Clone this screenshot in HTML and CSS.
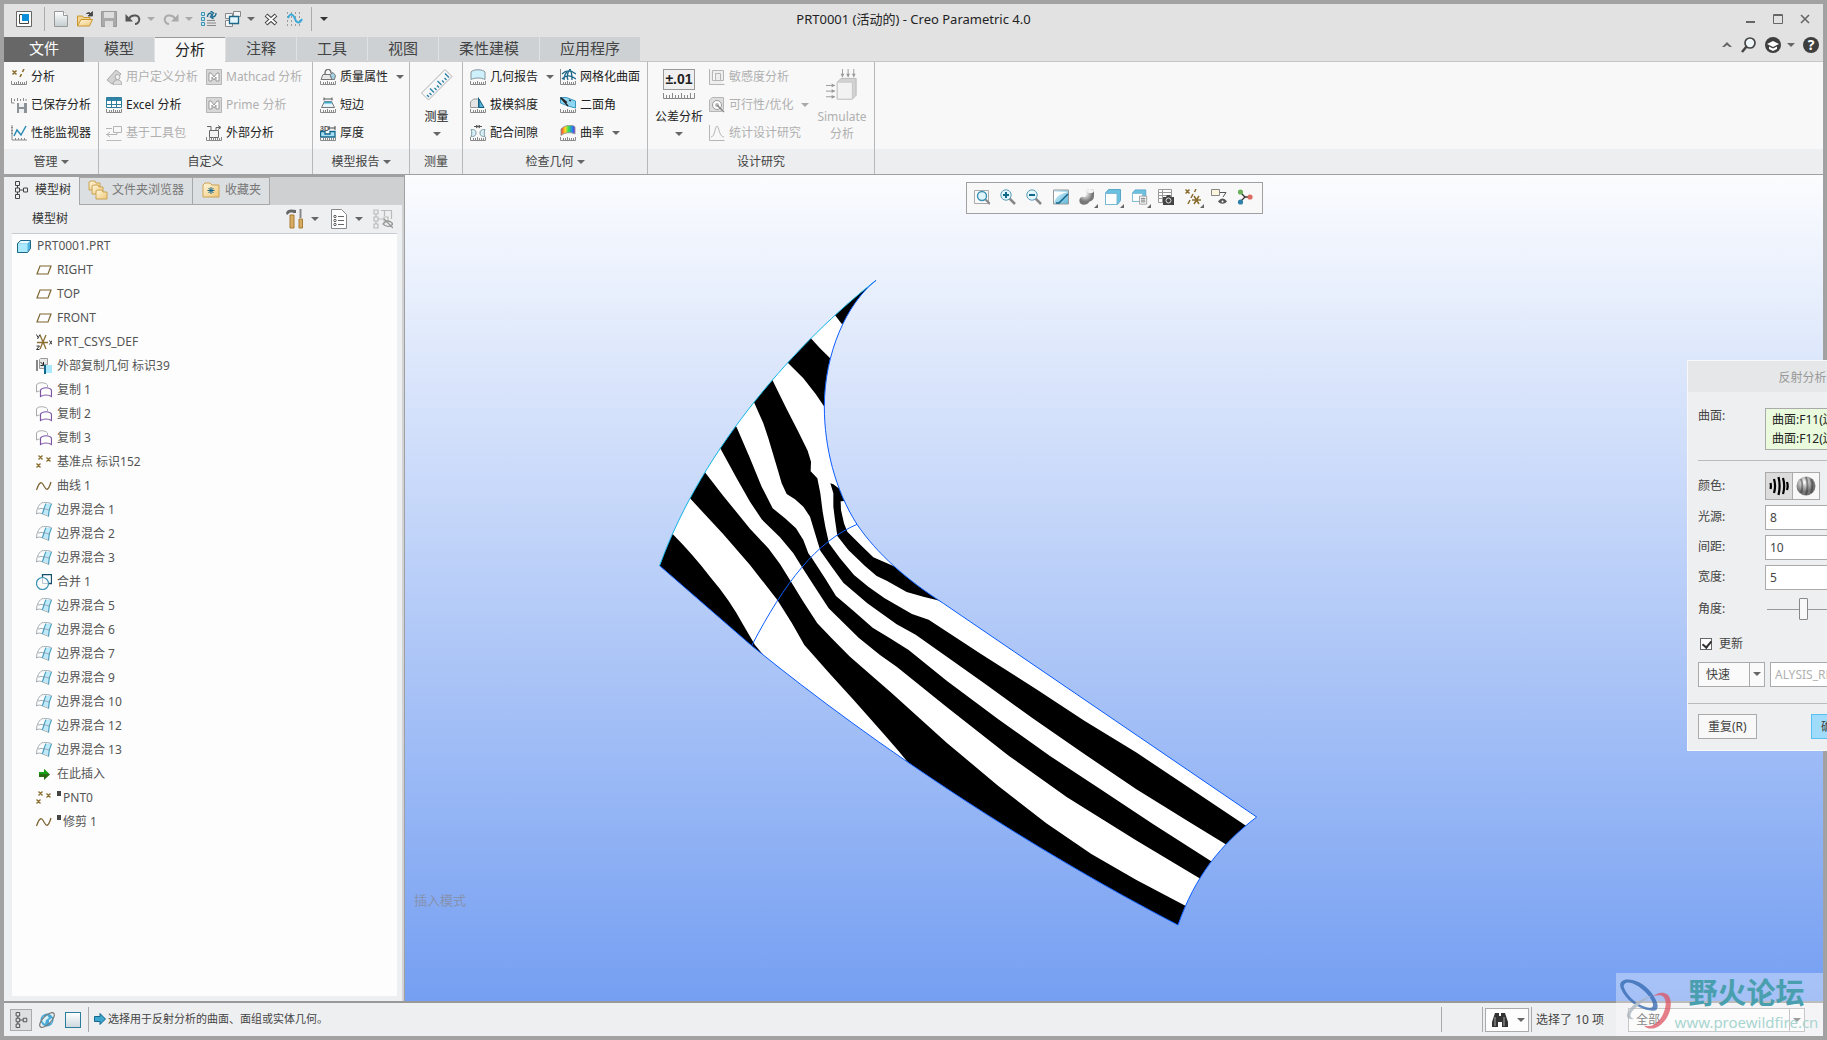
FILE: index.html
```
<!DOCTYPE html>
<html lang="zh-CN">
<head>
    <meta charset="UTF-8" />
    <meta name="viewport" content="width=device-width, initial-scale=1" />
    <title>PRT0001 (活动的) - Creo Parametric 4.0</title>
    <link rel="stylesheet" href="styles.css">
</head>
<body>
    <!-- icons -->
    <svg class="sprite" aria-hidden="true">
        <defs>
            <linearGradient id="gBlue" x1="0" y1="0" x2="1" y2="1"><stop offset="0" stop-color="#e4f8ff"/><stop offset="1" stop-color="#5cb5d8"/></linearGradient>
            <linearGradient id="gGray" x1="0" y1="0" x2="0" y2="1"><stop offset="0" stop-color="#fff"/><stop offset="1" stop-color="#c3ccd0"/></linearGradient>
            <linearGradient id="gFolder" x1="0" y1="0" x2="1" y2="1"><stop offset="0" stop-color="#fff6dc"/><stop offset="1" stop-color="#f0c878"/></linearGradient>
            <linearGradient id="gRainbow" x1="0" y1="0" x2="1" y2="0"><stop offset="0" stop-color="#e33"/><stop offset=".3" stop-color="#fd2"/><stop offset=".55" stop-color="#3d5"/><stop offset=".8" stop-color="#28e"/><stop offset="1" stop-color="#72d"/></linearGradient>
            <radialGradient id="gBall" cx=".4" cy=".3"><stop offset="0" stop-color="#fff"/><stop offset="1" stop-color="#777"/></radialGradient>
            <g id="ruler"><path d="M.5 12v3.5h15V12M3.5 13v2M5.5 13v2M7.5 12v3M9.5 13v2M11.5 13v2M13.5 13v2" fill="none" stroke="#8a8a8a"/></g>
            <symbol id="i-analysis" viewBox="0 0 16 16"><path d="M1.5 1.500l4 4m0-4l-4 4M13 0l-1.500 3M10.500 5l-1.500 3" stroke="#8a6d2f" stroke-width="1.600" fill="none"/><use href="#ruler"/></symbol>
            <symbol id="i-saved" viewBox="0 0 16 16"><path d="M.5 1v5h3M3.500 2v2M6.500 1v3M9.500 2v2M12.500 1v3M15 2v2" fill="none" stroke="#8a8a8a"/><path d="M6 6h10v10H6z" fill="#8d9296"/><path d="M8 6h5v4H8zM8 12h5v4H8z" fill="#eef1f3"/></symbol>
            <symbol id="i-perf" viewBox="0 0 16 16"><path d="M1 0v15h15M0 2.500h2M0 5.500h2M0 8.500h2M4.500 13v2M7.500 13v2M10.500 13v2M13.500 13v2" fill="none" stroke="#8a8a8a"/><path d="M3 11l3-6 4 5 5-9" fill="none" stroke="#2b8ab4" stroke-width="1.500"/></symbol>
            <symbol id="i-user" viewBox="0 0 16 16"><path d="M1 11L10 1l5 4-9 10z" fill="#d2d2d2" stroke="#aaa"/><circle cx="11.500" cy="8" r="2.500" fill="#eee" stroke="#aaa"/><path d="M7 16c0-7 9-7 9 0z" fill="#ddd" stroke="#aaa"/></symbol>
            <symbol id="i-excel" viewBox="0 0 16 16"><path d="M.5.500h15v10H.500z" fill="#fff" stroke="#2f7d9c"/><path d="M1 1h14v3H1z" fill="#2f86aa"/><path d="M.5 7.500h15M5.500 1v9M10.500 1v9" stroke="#2f7d9c"/><use href="#ruler"/></symbol>
            <symbol id="i-kit" viewBox="0 0 16 16"><path d="M7.500 1.500h8v6h-8zM0 3.500h6M0 9.500h11v-2M4 7l-3 2.500 3 2.500" fill="none" stroke="#b5b5b5"/><path d="M.5 15.500h15" stroke="#bbb"/></symbol>
            <symbol id="i-mathcad" viewBox="0 0 16 16"><path d="M.5.500h15v15H.500z" fill="#d8d8d8" stroke="#b5b5b5"/><path d="M3 12V4h2l3 4 3-4h2v8h-3V8l-2 3-2-3v4z" fill="#fff" stroke="#999"/></symbol>
            <symbol id="i-external" viewBox="0 0 16 16"><path d="M3.500 5.500h9v7h-9zM1 1.500h4v4M10 5V2.500h4M12 .500l3 2-3 2" fill="#f2f2f2" stroke="#666"/><use href="#ruler"/></symbol>
            <symbol id="i-mass" viewBox="0 0 16 16"><path d="M1 10.500l2-5h7l2 5z" fill="#e8e8e8" stroke="#777"/><path d="M10 5.500l3-2 2.500 3-1 4H12z" fill="#9fd0e4" stroke="#777"/><path d="M5 5c0-6 6-6 6-1" fill="none" stroke="#777" stroke-width="1.500"/><use href="#ruler"/></symbol>
            <symbol id="i-short" viewBox="0 0 16 16"><path d="M4 .500v3M12 .500v3M4 2h8" stroke="#555"/><path d="M4.500 4.500h7l3 6h-13z" fill="#e5f4f9" stroke="#777"/><path d="M4.500 4.500h7l1 2h-9z" fill="#48a6c9"/><use href="#ruler"/></symbol>
            <symbol id="i-thick" viewBox="0 0 16 16"><text x="0" y="6" font-size="7" font-weight="bold" font-family="Liberation Sans" fill="#555">3D</text><path d="M9 3h6M9 1v4M15 1v4" stroke="#444"/><path d="M.5 6.500H5V9h5V6.500h5v5.500H.500z" fill="#a8def2" stroke="#14678c" stroke-width="1.300"/><use href="#ruler"/></symbol>
            <symbol id="i-measure" viewBox="0 0 32 32"><path d="M.5 24L24 .500l7 7L7.500 31z" fill="#f5f7f8" stroke="#b0b0b0"/><path d="M8 28l-2-2M10.500 26l-2-2M13 23.500l-4-4M15.500 21l-2-2M18 18.500l-2-2M20.500 16l-4-4M23 13.500l-2-2M25.500 11l-2-2M28 8.500l-4-4" stroke="#2b7fa5" stroke-width="1.300"/></symbol>
            <symbol id="i-geo" viewBox="0 0 16 16"><path d="M1 10.500V3c2-3 12-3 14 0v7.500c-4-2-10-2-14 0z" fill="#cdf0fc" stroke="#86969e"/><use href="#ruler"/></symbol>
            <symbol id="i-draft" viewBox="0 0 16 16"><path d="M.5 5l3-3H9v8.500H.500z" fill="#e5e5e5" stroke="#999"/><path d="M8.500.500v10M9 2l5 8.500H9z" fill="#56b3d6" stroke="#155f80"/><use href="#ruler"/></symbol>
            <symbol id="i-fit" viewBox="0 0 16 16"><path d="M4 1.500h8M6 0l4 3M10 0L6 3" stroke="#555"/><path d="M1 4.500c2 0 5 0 5 3.500s-3 3.500-5 3.500c1-2 1-5 0-7zM15 4.500c-2 0-5 0-5 3.500s3 3.500 5 3.500c-1-2-1-5 0-7z" fill="#d9eff7" stroke="#7b98a4"/><use href="#ruler"/></symbol>
            <symbol id="i-mesh" viewBox="0 0 16 16"><path d="M.5 0v15" stroke="#8a8a8a"/><path d="M2 5c4-4 9-4 14 0M2 10c4-4 9-4 14 0M8 11c-2-4 0-8 2-11M12 11c0-4 0-8-2-11M4 11c0-3 1-6 3-8" fill="none" stroke="#1d6888" stroke-width="1.300"/><use href="#ruler"/></symbol>
            <symbol id="i-dihedral" viewBox="0 0 16 16"><path d="M.5.500h6l9 3.500v7L8 9 .500 6z" fill="#8fd6f2" stroke="#3a96bd"/><path d="M.5.500L8 9M2 1.500l5 4M9 3l2 1" stroke="#222" stroke-width="1.300"/><use href="#ruler"/></symbol>
            <symbol id="i-curv" viewBox="0 0 16 16"><path d="M1 10.500V4c3-4 12-5 14-2v7c-4-2-10-2-14 1.500z" fill="url(#gRainbow)" stroke="#999"/><use href="#ruler"/></symbol>
            <symbol id="i-sens" viewBox="0 0 16 16"><path d="M.5 0v15.500h15M3.500 1.500h11v10h-11zM6.500 4.500h5v7h-5z" fill="#eee" stroke="#b5b5b5"/></symbol>
            <symbol id="i-feas" viewBox="0 0 16 16"><path d="M.5 3l3-2.500h11V12l-2 2.500H.500z" fill="#ddd" stroke="#b5b5b5"/><circle cx="8" cy="8" r="4.500" fill="#fff" stroke="#999"/><circle cx="8" cy="8" r="2" fill="#bbb"/><path d="M8 8l7 7" stroke="#888" stroke-width="1.500"/></symbol>
            <symbol id="i-stat" viewBox="0 0 16 16"><path d="M.5 0v15.500h15M2 12c4 0 4-11 6-11s2 11 7 11" fill="none" stroke="#b5b5b5"/></symbol>
            <symbol id="i-simulate" viewBox="0 0 34 34"><path d="M12 14l4-4h16v18l-4 4H12z" fill="#d2d2d2" stroke="#b8b8b8"/><path d="M12 14h16v18H12z" fill="#f2f2f2" stroke="#c5c5c5"/><path d="M17.500 0v8M23.500 0v8M29.500 0v8M0 17.500h9M0 23.500h9M0 29.500h9" stroke="#999"/><path d="M15.500 5h4l-2 4zM21.500 5h4l-2 4zM27.500 5h4l-2 4zM6 15.500v4l4-2zM6 21.500v4l4-2zM6 27.500v4l4-2z" fill="#999"/></symbol>
            <symbol id="i-app" viewBox="0 0 16 16"><path d="M.5.500h15v15H.500z" fill="#fff" stroke="#666"/><path d="M3.500 3.500h9v9h-9z" fill="#fff" stroke="#444"/><path d="M6 3h7v7H6z" fill="#0a8fd8"/></symbol>
            <symbol id="i-new" viewBox="0 0 16 16"><path d="M1.500.500h9l4 4v11h-13z" fill="url(#gGray)" stroke="#999"/><path d="M10.500.500v4h4" fill="#fff" stroke="#999"/></symbol>
            <symbol id="i-open" viewBox="0 0 16 16"><path d="M.5 15V5h5l1 1.500H13V9" fill="#f3d491" stroke="#c9962f"/><path d="M.5 15L4 8.500h11.500L12.500 15z" fill="url(#gFolder)" stroke="#c9962f"/><path d="M9 3c2-2 4-2 5 0M15.500.500V5H11z" fill="#444" stroke="#444" stroke-width=".8"/></symbol>
            <symbol id="i-save" viewBox="0 0 16 16"><path d="M.5.500h15v15H.500z" fill="#aaa" stroke="#999"/><path d="M3 1h10v6H3zM4 10h8v6H4z" fill="#ddd"/></symbol>
            <symbol id="i-undo" viewBox="0 0 16 16"><path d="M4 8c2-5 12-5 10 2-.500 1.500-2 3-4 3" fill="none" stroke="#555" stroke-width="2"/><path d="M.5 3v7.500H8z" fill="#555"/></symbol>
            <symbol id="i-redo" viewBox="0 0 16 16"><path d="M12 8C10 3 0 3 2 10c.500 1.500 2 3 4 3" fill="none" stroke="#aaa" stroke-width="2"/><path d="M15.500 3v7.500H8z" fill="#aaa"/></symbol>
            <symbol id="i-regen" viewBox="0 0 16 16"><path d="M.5 1.500h3v3h-3zM.5 6.500h3v3h-3zM.5 11.500h3v3h-3z" fill="#c8eefb" stroke="#3a91b5"/><path d="M6 9.500h8M6 12h9M6 14.500h9" stroke="#888"/><path d="M6.500 6c0-3 1-4 4-4M9.500 0l3 2-3 2.500M15 2c0 3-1 4-4 4M12 3.500L9.500 6l3 2" fill="none" stroke="#1f6f92" stroke-width="1.400"/></symbol>
            <symbol id="i-windows" viewBox="0 0 16 16"><path d="M.5 2.500h7v5h-7zM8.500.500h7v5h-7zM.5 9.500h7v6h-7z" fill="#f5f5f5" stroke="#888"/><path d="M4.500 5.500h9v7h-9z" fill="#e3f6fc" stroke="#1d6888" stroke-width="1.300"/></symbol>
            <symbol id="i-closewin" viewBox="0 0 16 16"><path d="M3 4l10 9M13 4L3 13" stroke="#444" stroke-width="4"/><path d="M3.500 4.500l9 8M12.500 4.500l-9 8" stroke="#fff" stroke-width="1.800"/></symbol>
            <symbol id="i-wave" viewBox="0 0 16 16"><path d="M0 2h16M0 6h16M0 10h16M0 14h16" stroke="#555" stroke-dasharray="1 3"/><path d="M1 7c3-7 6-2 7 1s4 6 7 0" fill="none" stroke="#36a9d8" stroke-width="2"/></symbol>
            <symbol id="i-tree" viewBox="0 0 18 18"><path d="M3.500.500h4v4h-4zM3.500 7h4v4h-4zM3.500 13.500h4v4h-4zM11.500 7h4v4h-4zM5.500 4.500V7M5.500 11v2.500M7.500 9h4" fill="none" stroke="#444"/></symbol>
            <symbol id="i-folders" viewBox="0 0 20 20"><path d="M1 10V2l2-1h4l1 2h4v7z" fill="url(#gFolder)" stroke="#c9a250"/><path d="M4 14V6l2-1h4l1 2h4v7z" fill="url(#gFolder)" stroke="#c9a250"/><path d="M8 19v-8l2-1h4l1 2h4v7z" fill="url(#gFolder)" stroke="#c9a250"/></symbol>
            <symbol id="i-fav" viewBox="0 0 20 20"><path d="M2 17V5l2-2h5l2 2h7v12z" fill="url(#gFolder)" stroke="#c9a250"/><path d="M10 7v7M6.500 10.500h7M7.500 8l5 5M12.500 8l-5 5" stroke="#14678c"/></symbol>
            <symbol id="i-tools" viewBox="0 0 18 20"><path d="M0 4c1-4 5-4 10-3v3H7V3.500H4L1 6z" fill="#666"/><path d="M4 6h4v13H4z" fill="#d8ad63" stroke="#a87a32"/><path d="M14.500 0v9" stroke="#888" stroke-width="2"/><path d="M13 10h3.500v9H13z" fill="#d8ad63" stroke="#a87a32"/></symbol>
            <symbol id="i-list" viewBox="0 0 18 20"><path d="M1.500.500h10l5 5v14h-15z" fill="#fff" stroke="#888"/><path d="M8 7.500h6M8 11.500h6M8 15.500h6" stroke="#666"/><circle cx="5" cy="7.500" r="1.200" fill="none" stroke="#555"/><circle cx="5" cy="11.500" r="1.200" fill="none" stroke="#555"/><circle cx="5" cy="15.500" r="1.200" fill="none" stroke="#555"/></symbol>
            <symbol id="i-hidetree" viewBox="0 0 20 20"><path d="M1 1h4v4H1zM1 8h4v4H1zM1 15h4v4H1zM11 8h4v4h-4zM3 5v3M3 12v3M5 10h6M8 1.500h11M11.500 2v5M18.500 2v8" fill="none" stroke="#bbb" stroke-width="1.200"/><path d="M10 15c3-4 7-4 10 0-3 3-7 3-10 0zM11 10l9 9" fill="none" stroke="#999" stroke-width="1.300"/></symbol>
            <symbol id="i-part" viewBox="0 0 16 16"><path d="M1.500 5.500l3-3h10v8l-3 4h-10z" fill="#4db4dd" stroke="#1d6888"/><path d="M2 6h9.500v8H2z" fill="#a9e8fd"/><path d="M2 5.500l3-2.500h9l-2.500 2.500z" fill="#e8faff"/></symbol>
            <symbol id="i-plane" viewBox="0 0 16 16"><path d="M4 4h11l-3 8H1z" fill="none" stroke="#7d6432" stroke-width="1.200"/></symbol>
            <symbol id="i-csys" viewBox="0 0 16 16"><path d="M1 8.500h11M4 1l6 14M10 1L4 15" stroke="#8a6d2f" stroke-width="1.300"/><path d="M.5.500L2 3.500M4 .500L1.500 5M13.500 6.500l2.500 4m0-4l-2.500 4M.5 12h3L.500 15.500h3" fill="none" stroke="#333"/></symbol>
            <symbol id="i-extcopy" viewBox="0 0 16 16"><path d="M0 2h2v11H0z" fill="#888"/><path d="M3.500 1.500l1-1h7v6h-3v4h-5z" fill="#e8e8e8" stroke="#999"/><path d="M4.500 4l3 3M7.500 4v3.500H4.500" stroke="#222" fill="none"/><path d="M10 7h6v8h-6z" fill="#a9e8fd"/><path d="M8 7h2v9H8z" fill="#14678c"/></symbol>
            <symbol id="i-copy" viewBox="0 0 16 16"><path d="M.5 10V3c1-3 9-3 11 0v2M.5 10l3-1" fill="none" stroke="#aaa"/><path d="M4.500 14.500V8c2-3 9-3 11 0v6.500c-3-2-8-2-11 0z" fill="#fff" stroke="#7b55a3" stroke-width="1.200"/></symbol>
            <symbol id="i-points" viewBox="0 0 16 16"><path d="M2.500 1.500l4 4m0-4l-4 4M10.500 3.500l4 4m0-4l-4 4M.5 9.500l4 4m0-4l-4 4" stroke="#8a6d2f" stroke-width="1.300"/></symbol>
            <symbol id="i-curve" viewBox="0 0 16 16"><path d="M.5 12C4 2 6 4 8 8s4 6 7-4" fill="none" stroke="#7d6432" stroke-width="1.300"/></symbol>
            <symbol id="i-blend" viewBox="0 0 16 16"><path d="M10 2c2-.500 4-.500 5.500-.500-2 4-3 8-3 12.500-1.500-1.500-4-2-6-2C8 9 8.500 5 10 2z" fill="#bdeafa"/><path d="M.5 12C.500 7 3 1 7.500.500c3-.300 5 .200 8 1M.5 12c2-1.500 4-1 6 0s4 1 6 2.500M2 7c4-1.500 8 .500 12 1" fill="none" stroke="#a3adb2"/><path d="M10 1.500C8 5 8 9 6 12M15.500 2c-2 4-3 8-3 12.500" fill="none" stroke="#4c9dbd" stroke-width="1.200"/></symbol>
            <symbol id="i-merge" viewBox="0 0 16 16"><path d="M6.500 3V.500h9v9H12" fill="none" stroke="#14506c" stroke-width="1.300"/><circle cx="6.500" cy="9.500" r="6" fill="none" stroke="#3a91b5" stroke-width="1.200"/><path d="M6.500 4v5.500H12" fill="none" stroke="#b8c8d0"/></symbol>
            <symbol id="i-insert" viewBox="0 0 16 16"><path d="M3 6h5V3l6 5.500L8 14v-3H3z" fill="#2a6a12"/><path d="M3 6h5V3l5 5H3z" fill="#16a016"/></symbol>
            <symbol id="i-zoomfit" viewBox="0 0 16 16"><path d="M.5 1.500h14v13H.500z" fill="#fafafa" stroke="#aaa"/><path d="M11 10l5 5" stroke="#888" stroke-width="2"/><circle cx="8" cy="7" r="4.500" fill="#dff4fb" stroke="#3a91b5" stroke-width="1.400"/></symbol>
            <symbol id="i-zoomin" viewBox="0 0 16 16"><path d="M9 9l6 6" stroke="#888" stroke-width="2.500"/><circle cx="6" cy="6" r="5.200" fill="#e2f6fd" stroke="#5c9cb8"/><path d="M3 6h6M6 3v6" stroke="#14678c" stroke-width="2"/></symbol>
            <symbol id="i-zoomout" viewBox="0 0 16 16"><path d="M9 9l6 6" stroke="#888" stroke-width="2.500"/><circle cx="6" cy="6" r="5.200" fill="#e2f6fd" stroke="#5c9cb8"/><path d="M3 6h6" stroke="#14678c" stroke-width="2"/></symbol>
            <symbol id="i-repaint" viewBox="0 0 16 16"><path d="M.5 1h15v14H.500z" fill="url(#gBlue)" stroke="#999"/><path d="M1 3v12c1-7 5-10 14-12z" fill="#fff"/><path d="M3 14h3l9-9" fill="none" stroke="#14678c" stroke-width="1.500"/></symbol>
            <symbol id="i-shade" viewBox="0 0 16 16"><path d="M7 2c2-3 8-2 8 0v5c0 4-3 5-5 6-1 3-7 4-9 1C-1 10 2 7 5 8c2 0 3-2 2-6z" fill="url(#gBall)"/><path d="M7 2c2-3 8-2 8 0-1 3-6 3-8 0z" fill="#f4f4f4"/></symbol>
            <symbol id="i-box" viewBox="0 0 16 16"><path d="M.5 4l3-3.500h12v11l-3 4H.500z" fill="#6cc0e0" stroke="#5aa8c8"/><path d="M.5 4.500h11.500v11H.500z" fill="#fff" stroke="#7ab9d3"/></symbol>
            <symbol id="i-boxlist" viewBox="0 0 18 17"><path d="M.5 4l3-3.500h12v11l-3 2H.500z" fill="#6cc0e0" stroke="#5aa8c8"/><path d="M.5 4.500h11.500v9H.500z" fill="#fff" stroke="#7ab9d3"/><path d="M8.500 7.500h8v9h-8z" fill="#fff" stroke="#999"/><path d="M10 10h5M10 12h5M10 14h5" stroke="#666"/></symbol>
            <symbol id="i-viewcam" viewBox="0 0 16 16"><path d="M.5.500h13v13H.500zM.5 3.500h13M.5 6.500h13M.5 9.500h13M4.500.500v13" fill="#fff" stroke="#999"/><path d="M5 8h3l1-2h3l1 2h3v8H5z" fill="#444"/><circle cx="10.500" cy="11.500" r="2.500" fill="none" stroke="#ddd"/></symbol>
            <symbol id="i-datum" viewBox="0 0 16 16"><path d="M.5.500l4 4m0-4l-4 4M11 0L9.500 3M8 5L6 9M5 11l-2 4M7 11h9M9 7l5 8M14 7l-5 8" stroke="#8a6d2f" stroke-width="1.500"/></symbol>
            <symbol id="i-annot" viewBox="0 0 16 16"><path d="M.5.500h8v6h-8z" fill="#fdf6dc" stroke="#888"/><path d="M9 3.500h6L12 8" fill="none" stroke="#555"/><path d="M7 12.500c3-4 6-4 9 0-3 3-6 3-9 0z" fill="#555"/><circle cx="11.500" cy="12.500" r="1" fill="#fff"/></symbol>
            <symbol id="i-spin" viewBox="0 0 16 16"><path d="M3 3l5 5h5M8 8l-5 5" fill="none" stroke="#333" stroke-width="1.300"/><circle cx="3.500" cy="3" r="2.600" fill="#6bb05a"/><circle cx="13" cy="8" r="2.600" fill="#dc6b62"/><circle cx="3.500" cy="13" r="2.600" fill="#2f80a8"/></symbol>
            <symbol id="i-search" viewBox="0 0 16 16"><path d="M6 9l-5 6" stroke="#444" stroke-width="2.500"/><circle cx="9" cy="6" r="5" fill="#eef6f9" stroke="#444" stroke-width="1.700"/></symbol>
            <symbol id="i-learn" viewBox="0 0 16 16"><circle cx="8" cy="8" r="8" fill="#3e3e3e"/><path d="M2 7l6-3 6 3-6 3z" fill="#fff"/><path d="M4 9.500v2.500l4 2 4-2V9.500L8 11.500z" fill="#fff"/></symbol>
            <symbol id="i-globe" viewBox="0 0 18 18"><circle cx="9" cy="9" r="6.500" fill="#49a9d6"/><path d="M5 6l4-2 2 3-3 2-1 4-3-3zM11 9l3-2v4l-3 2z" fill="#d9f3fc"/><ellipse cx="9" cy="9" rx="9.500" ry="4" transform="rotate(-45 9 9)" fill="none" stroke="#777" stroke-width="1.200"/></symbol>
            <symbol id="i-arrow" viewBox="0 0 12 12"><path d="M.5 3.500H6v-3L11.500 6 6 11.500v-3H.500z" fill="#3ea5cc" stroke="#14678c"/></symbol>
            <symbol id="i-find" viewBox="0 0 16 16"><path d="M3 1h4v3h2V1h4l3 9v5h-6v-5H6v5H0v-5z" fill="#333"/><path d="M3 5v9M12 5v9" stroke="#aaa"/></symbol>
            <symbol id="i-zebra" viewBox="0 0 20 20"><path d="M1.500 7c.500 2 .500 4 0 6M5 3c1.500 5 1.500 9 0 14M9.500 1c1.500 6 1.500 12 0 18M14 2c1.500 5 1.500 11 0 16M18 6c1 3 1 5 0 8" fill="none" stroke="#000" stroke-width="2.200"/></symbol>
            <symbol id="i-sphere" viewBox="0 0 20 20"><circle cx="10" cy="10" r="9.500" fill="url(#gBall)"/><path d="M5 3c2 5 2 9 0 14M10 1c2 6 2 12 0 18M15 3c2 5 2 9 0 14" fill="none" stroke="#333" stroke-opacity=".5" stroke-width="2"/></symbol>
        </defs>
    </svg>

    <div class="window">
        <header class="titlebar">
            <div class="quick">
                <button class="qbtn app" aria-label="Creo"><svg class="i16"><use href="#i-app"/></svg></button>
                <span class="sep"></span>
                <button class="qbtn" aria-label="新建"><svg class="i16"><use href="#i-new"/></svg></button>
                <button class="qbtn" aria-label="打开"><svg class="i16"><use href="#i-open"/></svg></button>
                <button class="qbtn" aria-label="保存"><svg class="i16"><use href="#i-save"/></svg></button>
                <button class="qbtn pair" aria-label="撤销"><svg class="i16"><use href="#i-undo"/></svg><i class="caret dim"></i></button>
                <button class="qbtn pair" aria-label="重做"><svg class="i16"><use href="#i-redo"/></svg><i class="caret dim"></i></button>
                <button class="qbtn" aria-label="重新生成"><svg class="i16"><use href="#i-regen"/></svg></button>
                <button class="qbtn pair" aria-label="窗口"><svg class="i16"><use href="#i-windows"/></svg><i class="caret"></i></button>
                <button class="qbtn" aria-label="关闭"><svg class="i16"><use href="#i-closewin"/></svg></button>
                <button class="qbtn" aria-label="曲线"><svg class="i16"><use href="#i-wave"/></svg></button>
                <span class="sep"></span>
                <button class="qbtn more" aria-label="自定义"><i class="caret dark"></i></button>
            </div>
            <h1 class="title">PRT0001 (活动的) - Creo Parametric 4.0</h1>
            <div class="winbtns">
                <button aria-label="最小化"><svg class="i12" viewBox="0 0 12 12"><path d="M1 9h9" stroke="#666" stroke-width="2"/></svg></button>
                <button aria-label="最大化"><svg class="i12" viewBox="0 0 12 12"><path d="M1.500 1.500h9v9h-9zM1.500 2.500h9" fill="none" stroke="#666"/></svg></button>
                <button aria-label="关闭窗口"><svg class="i12" viewBox="0 0 12 12"><path d="M2 2l8 8M10 2l-8 8" stroke="#666" stroke-width="1.600"/></svg></button>
            </div>
        </header>

        <nav class="tabs">
            <button class="tab file">文件</button>
            <button class="tab">模型</button>
            <button class="tab active">分析</button>
            <button class="tab">注释</button>
            <button class="tab">工具</button>
            <button class="tab">视图</button>
            <button class="tab wide">柔性建模</button>
            <button class="tab wide">应用程序</button>
            <div class="helpbar">
                <button aria-label="折叠"><svg class="i12" viewBox="0 0 12 12"><path d="M1 8l5-5 5 5H8.500L6 6 3.500 8z" fill="#666"/></svg></button>
                <button aria-label="搜索"><svg class="i16"><use href="#i-search"/></svg></button>
                <button class="pair" aria-label="学习"><svg class="i16"><use href="#i-learn"/></svg><i class="caret"></i></button>
                <button class="help" aria-label="帮助">?</button>
            </div>
        </nav>

        <section class="ribbon">
            <div class="group g-manage">
                <div class="tools">
                    <button class="tool"><svg class="i16"><use href="#i-analysis"/></svg>分析</button>
                    <button class="tool"><svg class="i16"><use href="#i-saved"/></svg>已保存分析</button>
                    <button class="tool"><svg class="i16"><use href="#i-perf"/></svg>性能监视器</button>
                </div>
                <div class="group-label">管理<i class="caret"></i></div>
            </div>
            <div class="group g-custom">
                <div class="tools">
                    <button class="tool" disabled><svg class="i16"><use href="#i-user"/></svg>用户定义分析</button>
                    <button class="tool"><svg class="i16"><use href="#i-excel"/></svg>Excel 分析</button>
                    <button class="tool" disabled><svg class="i16"><use href="#i-kit"/></svg>基于工具包</button>
                    <button class="tool" disabled><svg class="i16"><use href="#i-mathcad"/></svg>Mathcad 分析</button>
                    <button class="tool" disabled><svg class="i16"><use href="#i-mathcad"/></svg>Prime 分析</button>
                    <button class="tool"><svg class="i16"><use href="#i-external"/></svg>外部分析</button>
                </div>
                <div class="group-label">自定义</div>
            </div>
            <div class="group g-report">
                <div class="tools">
                    <button class="tool"><svg class="i16"><use href="#i-mass"/></svg>质量属性<i class="caret"></i></button>
                    <button class="tool"><svg class="i16"><use href="#i-short"/></svg>短边</button>
                    <button class="tool"><svg class="i16"><use href="#i-thick"/></svg>厚度</button>
                </div>
                <div class="group-label">模型报告<i class="caret"></i></div>
            </div>
            <div class="group g-measure">
                <div class="tools">
                    <button class="tool big"><svg class="i32"><use href="#i-measure"/></svg>测量<i class="caret"></i></button>
                </div>
                <div class="group-label">测量</div>
            </div>
            <div class="group g-inspect">
                <div class="tools">
                    <button class="tool"><svg class="i16"><use href="#i-geo"/></svg>几何报告<i class="caret"></i></button>
                    <button class="tool"><svg class="i16"><use href="#i-draft"/></svg>拔模斜度</button>
                    <button class="tool"><svg class="i16"><use href="#i-fit"/></svg>配合间隙</button>
                    <button class="tool"><svg class="i16"><use href="#i-mesh"/></svg>网格化曲面</button>
                    <button class="tool"><svg class="i16"><use href="#i-dihedral"/></svg>二面角</button>
                    <button class="tool"><svg class="i16"><use href="#i-curv"/></svg>曲率<i class="caret"></i></button>
                </div>
                <div class="group-label">检查几何<i class="caret"></i></div>
            </div>
            <div class="group g-study">
                <div class="tools">
                    <button class="tool big">
                        <span class="tolerance"><b>±.01</b><svg viewBox="0 0 32 6"><path d="M.5 0v5.500h31V0M3.500 2v3M6.500 2v3M9.500 0v5M12.500 2v3M15.500 2v3M18.500 0v5M21.500 2v3M24.500 2v3M27.500 0v5" fill="none" stroke="#888"/></svg></span>
                        公差分析<i class="caret"></i>
                    </button>
                    <button class="tool" disabled><svg class="i16"><use href="#i-sens"/></svg>敏感度分析</button>
                    <button class="tool" disabled><svg class="i16"><use href="#i-feas"/></svg>可行性/优化<i class="caret dim"></i></button>
                    <button class="tool" disabled><svg class="i16"><use href="#i-stat"/></svg>统计设计研究</button>
                    <button class="tool big" disabled><svg class="i32"><use href="#i-simulate"/></svg>Simulate<br>分析</button>
                </div>
                <div class="group-label">设计研究</div>
            </div>
            <div class="group rest">
                <div class="tools"></div>
                <div class="group-label"></div>
            </div>
        </section>

        <main class="work">
            <aside class="sidebar">
                <div class="side-tabs">
                    <button class="side-tab active"><svg class="i18"><use href="#i-tree"/></svg>模型树</button>
                    <button class="side-tab"><svg class="i20"><use href="#i-folders"/></svg>文件夹浏览器</button>
                    <button class="side-tab"><svg class="i20"><use href="#i-fav"/></svg>收藏夹</button>
                </div>
                <div class="side-head">
                    <span class="side-title">模型树</span>
                    <button aria-label="设置"><svg class="i20"><use href="#i-tools"/></svg><i class="caret"></i></button>
                    <button aria-label="显示"><svg class="i20"><use href="#i-list"/></svg><i class="caret"></i></button>
                    <button aria-label="隐藏树" disabled><svg class="i20"><use href="#i-hidetree"/></svg></button>
                </div>
                <ul class="tree">
                    <li class="root"><svg class="i16"><use href="#i-part"/></svg>PRT0001.PRT</li>
                    <li><svg class="i16"><use href="#i-plane"/></svg>RIGHT</li>
                    <li><svg class="i16"><use href="#i-plane"/></svg>TOP</li>
                    <li><svg class="i16"><use href="#i-plane"/></svg>FRONT</li>
                    <li><svg class="i16"><use href="#i-csys"/></svg>PRT_CSYS_DEF</li>
                    <li><svg class="i16"><use href="#i-extcopy"/></svg>外部复制几何 标识39</li>
                    <li><svg class="i16"><use href="#i-copy"/></svg>复制 1</li>
                    <li><svg class="i16"><use href="#i-copy"/></svg>复制 2</li>
                    <li><svg class="i16"><use href="#i-copy"/></svg>复制 3</li>
                    <li><svg class="i16"><use href="#i-points"/></svg>基准点 标识152</li>
                    <li><svg class="i16"><use href="#i-curve"/></svg>曲线 1</li>
                    <li><svg class="i16"><use href="#i-blend"/></svg>边界混合 1</li>
                    <li><svg class="i16"><use href="#i-blend"/></svg>边界混合 2</li>
                    <li><svg class="i16"><use href="#i-blend"/></svg>边界混合 3</li>
                    <li><svg class="i16"><use href="#i-merge"/></svg>合并 1</li>
                    <li><svg class="i16"><use href="#i-blend"/></svg>边界混合 5</li>
                    <li><svg class="i16"><use href="#i-blend"/></svg>边界混合 6</li>
                    <li><svg class="i16"><use href="#i-blend"/></svg>边界混合 7</li>
                    <li><svg class="i16"><use href="#i-blend"/></svg>边界混合 9</li>
                    <li><svg class="i16"><use href="#i-blend"/></svg>边界混合 10</li>
                    <li><svg class="i16"><use href="#i-blend"/></svg>边界混合 12</li>
                    <li><svg class="i16"><use href="#i-blend"/></svg>边界混合 13</li>
                    <li><svg class="i16"><use href="#i-insert"/></svg>在此插入</li>
                    <li><svg class="i16"><use href="#i-points"/></svg><i class="mark"></i>PNT0</li>
                    <li><svg class="i16"><use href="#i-curve"/></svg><i class="mark"></i>修剪 1</li>
                </ul>
            </aside>

            <div class="canvas">
                <div class="viewbar">
                    <button aria-label="重新调整"><svg class="i16"><use href="#i-zoomfit"/></svg></button>
                    <button aria-label="放大"><svg class="i16"><use href="#i-zoomin"/></svg></button>
                    <button aria-label="缩小"><svg class="i16"><use href="#i-zoomout"/></svg></button>
                    <button aria-label="重画"><svg class="i16"><use href="#i-repaint"/></svg></button>
                    <button class="drop" aria-label="渲染"><svg class="i16"><use href="#i-shade"/></svg></button>
                    <button class="drop" aria-label="显示样式"><svg class="i16"><use href="#i-box"/></svg></button>
                    <button class="drop" aria-label="已保存方向"><svg class="i16"><use href="#i-boxlist"/></svg></button>
                    <button aria-label="视图管理器"><svg class="i16"><use href="#i-viewcam"/></svg></button>
                    <button class="drop" aria-label="基准显示"><svg class="i16"><use href="#i-datum"/></svg></button>
                    <button aria-label="注释显示"><svg class="i16"><use href="#i-annot"/></svg></button>
                    <button aria-label="旋转中心"><svg class="i16"><use href="#i-spin"/></svg></button>
                </div>

                <!-- zebra stripes on the surface -->
                <svg class="surface" viewBox="0 0 1920 2040">
                    <defs>
                        <clipPath id="outline">
                            <path d="M708 61C480 240 190 555 59 917L335 1157C720 1470 1180 1770 1614 1995 1665 1850 1740 1755 1850 1671L910 1030C800 960 710 880 651 793 585 690 553 560 553 440 553 280 620 130 708 61z"/>
                        </clipPath>
                    </defs>
                    <g clip-path="url(#outline)">
                        <path d="M0 0h1920v2040H0z" fill="#fff"/>
                        <path d="M570 150L583 163 606 193 720 90 667 80z"/>
                        <path d="M500 222L510 232 540 265 572 296 590 440 553 440 527 402 490 355 441 306 430 296z"/>
                        <path d="M385 340L396 358 440 447 475 515 503 572 513 605 512 634 532 655 541 700 548 755 556 800 567 850 600 895 642 945 685 980 734 1015 816 1062 866 1079 1023 1182 1188 1287 1333 1382 1488 1477 1643 1580 1818 1697 1860 1720 1800 1790 1762 1756 1643 1683 1488 1587 1333 1482 1178 1375 1040 1275 930 1197 827 1124 770 1093 682 1030 610 968 575 920 541 872 525 820 510 770 490 740 465 718 440 702 425 670 415 635 400 585 385 535 370 490 342 427 330 420z"/>
                        <path d="M280 490L290 502 330 595 365 680 398 745 435 775 468 805 490 840 505 880 516 895 555 955 588 1008 640 1052 698 1103 750 1135 806 1170 920 1262 1075 1378 1230 1488 1385 1590 1540 1693 1716 1805 1740 1830 1700 1870 1681 1856 1488 1741 1281 1612 1106 1487 920 1341 770 1220 720 1185 656 1133 566 1045 540 1005 488 925 460 880 420 832 365 778 330 725 290 655 242 567 230 550z"/>
                        <path d="M185 625L196 638 250 708 330 806 385 865 420 912 455 968 490 1025 532 1090 575 1135 630 1190 754 1298 920 1448 1075 1578 1219 1690 1354 1782 1488 1859 1636 1937 1660 1950 1620 2040 1400 1940 790 1540 816 1522 775 1472 734 1425 641 1320 568 1240 493 1155 455 1088 412 1020 330 915 250 823 150 715 140 700z"/>
                        <path d="M88 808L98 822Q160 885 210 950 270 1020 310 1095L345 1155 374 1190 330 1180 30 920z"/>
                        <path d="M571 670L580 673 600 688 630 722 602 724 603 750 612 790 622 815 665 858 700 892 760 918 780 930 960 1040 899 1022 850 1010 800 996 740 962 710 948 675 918 625 870 592 828 585 780 580 740 580 700z"/>
                    </g>
                    <g class="edges">
                        <path class="cyan" d="M708 61C480 240 190 555 59 917"/>
                        <path d="M59 917L335 1157C720 1470 1180 1770 1614 1995 1665 1850 1740 1755 1850 1671L910 1030C800 960 710 880 651 793 585 690 553 560 553 440 553 280 620 130 708 61"/>
                        <path d="M651 793C530 845 435 965 335 1157"/>
                    </g>
                </svg>
                <span class="mode">插入模式</span>
            </div>
        </main>

        <footer class="status">
            <button class="sbtn pressed" aria-label="导航器"><svg class="i16"><use href="#i-tree"/></svg></button>
            <button class="sbtn" aria-label="浏览器"><svg class="i18"><use href="#i-globe"/></svg></button>
            <button class="sbtn" aria-label="全屏"><span class="square"></span></button>
            <span class="sep"></span>
            <p class="message"><svg class="i12"><use href="#i-arrow"/></svg>选择用于反射分析的曲面、面组或实体几何。</p>
            <span class="sep"></span>
            <span class="sep gap"></span>
            <button class="find" aria-label="查找"><svg class="i16"><use href="#i-find"/></svg><i class="caret"></i></button>
            <span class="sep"></span>
            <span class="selected">选择了 10 项</span>
            <span class="filter"><select aria-label="过滤器"><option>全部</option></select></span>
        </footer>
    </div>

    <form class="dialog">
        <h2>反射分析</h2>
        <div class="dialog-body">
            <div class="field top">
                <label for="surfaces">曲面:</label>
                <textarea id="surfaces" rows="2" readonly>曲面:F11(边界混合_5)
曲面:F12(边界混合_6)</textarea>
            </div>
            <hr>
            <div class="field">
                <span class="name">颜色:</span>
                <button type="button" class="swatch on" aria-label="黑白"><svg class="i20"><use href="#i-zebra"/></svg></button>
                <button type="button" class="swatch" aria-label="灰度"><svg class="i20"><use href="#i-sphere"/></svg></button>
            </div>
            <div class="field"><label for="light">光源:</label><input type="text" id="light" value="8" /></div>
            <div class="field"><label for="spacing">间距:</label><input type="text" id="spacing" value="10" /></div>
            <div class="field"><label for="width">宽度:</label><input type="text" id="width" value="5" /></div>
            <div class="field slider"><label for="angle">角度:</label><input type="range" id="angle" value="25" /></div>
            <div class="check"><input type="checkbox" id="update" checked /><label for="update">更新</label></div>
            <div class="mode-row">
                <span class="speed"><select aria-label="类型"><option>快速</option></select></span>
                <input type="text" aria-label="名称" value="ALYSIS_REFLECTION_1" disabled />
            </div>
        </div>
        <div class="dialog-foot">
            <button type="button">重复(R)</button>
            <button type="button" class="ok">确定</button>
        </div>
    </form>

    <div class="watermark">
        <svg class="rings" viewBox="0 0 60 58">
            <path fill-rule="evenodd" d="M3 12C-2-1 22-1 35 16c10 13 10 22 0 20C22 34 8 25 3 12zm3-2c3 11 17 22 28 23 6 0 4-7-3-15C20 6 7 2 6 10z" fill="#2f66b0"/>
            <path fill-rule="evenodd" d="M36 22c7-7 18-7 20 2 3 12-6 28-17 31-5 1-9 0-11-3 9 3 17-4 21-14 4-9 2-17-3-18-4-1-7 0-10 2z" fill="#dd5463"/>
            <path d="M36 20c-12 4-20 9-25 17-4 7 1 9 6 8-6-2-4-7 2-12 5-5 10-8 17-13z" fill="#a9b4bf"/>
        </svg>
        <div class="brand">
            <strong>野火论坛</strong>
            <span>www.proewildfire.cn</span>
        </div>
    </div>
</body>
</html>
```
FILE: styles.css
```
* {
    box-sizing: border-box;
}

body {
    margin: 0;
    height: 100vh;
    overflow: hidden;
    position: relative;
    background: #a2a2a2;
    color: #444;
    font-family: "Noto Sans", "Noto Sans CJK SC", sans-serif;
    font-size: 12px;
    line-height: 16px;
}

button,
input,
select,
textarea {
    font: inherit;
    color: inherit;
}

button {
    display: flex;
    align-items: center;
    padding: 0;
    border: none;
    background: none;
    white-space: nowrap;
}

svg {
    display: block;
    flex-shrink: 0;
}

.sprite {
    position: absolute;
    width: 0;
    height: 0;
}

.i12 { width: 12px; height: 12px; }
.i16 { width: 16px; height: 16px; }
.i18 { width: 18px; height: 18px; }
.i20 { width: 20px; height: 20px; }
.i32 { width: 32px; height: 32px; }

.caret {
    flex-shrink: 0;
    border: 4px solid transparent;
    border-top-color: #666;
    border-bottom: none;
}

.caret.dim { border-top-color: #aaa; }
.caret.dark { border-top-color: #333; }

.sep {
    align-self: stretch;
    width: 1px;
    background: #aaa;
}

.window {
    height: 100%;
    padding: 4px;
    display: flex;
    flex-direction: column;
}

/* title bar */
.titlebar {
    display: grid;
    grid-template-columns: 1fr auto 1fr;
    align-items: center;
    height: 33px;
    padding: 0 12px 4px;
    background: #e2e2e2;
}

.quick {
    display: flex;
    align-items: center;
    gap: 8px;
    height: 24px;
}

.qbtn.app { margin-right: 4px; }
.qbtn.pair { gap: 6px; }

.title {
    margin: 0;
    color: #222;
    font-size: 13px;
    font-weight: 400;
}

.winbtns {
    display: flex;
    justify-content: flex-end;
    gap: 15px;
}

/* ribbon tabs */
.tabs {
    display: flex;
    gap: 1px;
    height: 25px;
    background: #e2e2e2;
    border-bottom: 1px solid #c6c6c6;
}

.tab {
    justify-content: center;
    width: 70px;
    height: 25px;
    padding-bottom: 3px;
    background: #cdd1d4;
    font-size: 15px;
}

.tab.wide { width: 100px; }

.tab.file {
    width: 80px;
    margin-right: -1px;
    background: #676767;
    color: #fff;
}

.tab.active {
    background: #f8f8f8;
    border-top: 1px solid #999;
    color: #222;
}

.helpbar {
    flex: 1;
    display: flex;
    justify-content: flex-end;
    align-items: center;
    gap: 8px;
    padding: 0 4px 8px 0;
}

.helpbar .pair { gap: 6px; }

.help {
    justify-content: center;
    width: 16px;
    height: 16px;
    border-radius: 50%;
    background: #3e3e3e;
    color: #fff;
    font-size: 14px;
    font-weight: 700;
}

/* ribbon */
.ribbon {
    display: flex;
    height: 113px;
    background: #f8f8f8;
    border-bottom: 1px solid #a0a0a0;
}

.group {
    display: flex;
    flex-direction: column;
    border-right: 1px solid #b8b8b8;
}

.group.rest {
    flex: 1;
    border: none;
}

.tools {
    flex: 1;
    display: grid;
    grid-template-rows: repeat(3, 28px);
    grid-auto-flow: column;
    justify-content: start;
    padding: 1px 0 0 7px;
}

.group-label {
    display: flex;
    justify-content: center;
    align-items: center;
    gap: 3px;
    height: 25px;
    background: #eceeef;
}

.g-manage { width: 95px; }
.g-custom { width: 214px; }
.g-report { width: 97px; }
.g-measure { width: 53px; }
.g-inspect { width: 185px; }
.g-study { width: 227px; }

.g-custom .tools { grid-template-columns: 100px auto; }
.g-inspect .tools { grid-template-columns: 90px auto; }
.g-study .tools { grid-template-columns: 60px 100px 66px; padding-left: 1px; }
.g-measure .tools { grid-template-columns: 53px; padding-left: 0; }

.tool {
    gap: 4px;
    color: #222;
}

.tool .caret { margin-left: 4px; }

.tool:disabled { color: #b0b0b0; }

.tool.big {
    grid-row: 1 / 4;
    flex-direction: column;
    gap: 7px;
    padding-top: 6px;
    line-height: 17px;
}

.tool.big .caret { margin-left: 0; }

.tolerance {
    display: flex;
    flex-direction: column;
    gap: 3px;
    width: 32px;
    height: 32px;
}

.tolerance b {
    height: 21px;
    border: 1px solid #999;
    background: #f0f0f0;
    font: bold 14px/18px "Liberation Sans", sans-serif;
    text-align: center;
}

/* model tree */
.work {
    flex: 1;
    display: flex;
    min-height: 0;
}

.sidebar {
    flex: 0 0 401px;
    display: flex;
    flex-direction: column;
    background: #eeeff0;
    border-top: 2px solid #a0a0a0;
    border-right: 1px solid #a0a0a0;
    box-shadow: inset -2px 0 #d0d2d4;
}

.side-tabs {
    display: flex;
    height: 28px;
    background: #cfd0d2;
}

.side-tab {
    gap: 4px;
    padding: 0 8px 2px;
    border: 1px solid #a8a8a8;
    border-left: none;
    background: #dcdfe1;
    color: #777;
}

.side-tab.active {
    gap: 5px;
    padding: 0 8px 2px;
    border-top: none;
    border-bottom: none;
    background: #eeeff0;
    color: #333;
}

.side-head {
    display: flex;
    align-items: center;
    gap: 10px;
    height: 28px;
    padding: 0 11px 0 28px;
}

.side-head button { gap: 6px; }

.side-title {
    flex: 1;
    color: #333;
}

.tree {
    flex: 1;
    margin: 0 7px 5px 8px;
    padding: 0;
    list-style: none;
    background: #fdfdfd;
    border-top: 1px solid #c8ccd0;
}

.tree li {
    display: flex;
    align-items: center;
    gap: 5px;
    height: 24px;
    padding-left: 24px;
    color: #555;
}

.tree .root { padding-left: 4px; }

.mark {
    align-self: flex-start;
    width: 4px;
    height: 5px;
    margin: 5px -3px 0 0;
    background: #444;
}

/* graphics area */
.canvas {
    flex: 1;
    position: relative;
    overflow: hidden;
    background: linear-gradient(#fbfcfe, #759ff2);
}

.viewbar {
    display: flex;
    align-items: center;
    justify-content: space-between;
    width: 297px;
    height: 32px;
    margin: 7px auto 0;
    padding: 0 8px 2px 7px;
    border: 1px solid #a0a0a0;
    background: #f8f8f8;
}

.drop { position: relative; }

.drop::after {
    content: "";
    position: absolute;
    right: -3px;
    bottom: -3px;
    border-left: 4px solid transparent;
    border-bottom: 4px solid #666;
}

.surface {
    position: absolute;
    left: 235px;
    top: 85px;
    width: 640px;
    height: 680px;
}

.edges path {
    fill: none;
    stroke: #0a5cff;
    stroke-width: 3;
}

.edges .cyan { stroke: #10b4e4; }

.mode {
    position: absolute;
    left: 9px;
    bottom: 93px;
    color: #8592ae;
    font-size: 13px;
}

/* status bar */
.status {
    display: flex;
    align-items: center;
    height: 35px;
    padding: 4px 18px 4px 6px;
    border-top: 2px solid #999;
    background: #eeeff1;
}

.sbtn {
    justify-content: center;
    width: 22px;
    height: 22px;
    margin-right: 4px;
}

.sbtn.pressed {
    border: 1px solid #aaa;
    background: #dddfe1;
}

.square {
    width: 16px;
    height: 16px;
    border: 1px solid #2a7d9c;
    background: linear-gradient(#fff, #cdd9de);
}

.square + .sep { margin-left: 2px; }

.message {
    flex: 1;
    display: flex;
    align-items: center;
    margin: 0 0 2px 5px;
    font-size: 11px;
    gap: 2px;
}

.message + .sep { margin-right: 40px; }

.find {
    gap: 9px;
    height: 24px;
    margin: 0 2px;
    padding: 0 3px 0 6px;
    border: 1px solid #aaa;
    background: #fdfdfd;
}

.selected { margin: 0 24px 0 4px; }

.filter,
.speed {
    position: relative;
}

.filter select,
.speed select {
    appearance: none;
    width: 177px;
    height: 24px;
    padding: 0 7px;
    border: 1px solid #aaa;
    border-radius: 0;
    background: #fafafa;
}

.filter::after,
.speed::after {
    content: "";
    position: absolute;
    top: 10px;
    right: 4px;
    border: 4px solid transparent;
    border-top-color: #666;
    border-bottom: none;
}

.filter::before,
.speed::before {
    content: "";
    position: absolute;
    top: 0;
    right: 15px;
    height: 100%;
    border-left: 1px solid #aaa;
}

/* reflection dialog, runs past the right edge of the window */
.dialog {
    position: absolute;
    top: 360px;
    right: -91px;
    width: 231px;
    border: 1px solid #f8f8f8;
    background: #eeeff0;
}

.dialog h2 {
    margin: 0;
    height: 31px;
    background: #e5e7e8;
    color: #999;
    font-size: 12px;
    font-weight: 400;
    line-height: 34px;
    text-align: center;
}

.dialog-body {
    padding: 16px 10px;
}

.dialog hr {
    margin: 10px 0 9px;
    border: none;
    border-top: 1px solid #bbb;
}

.field {
    display: flex;
    align-items: center;
    min-height: 30px;
}

.field.top { align-items: flex-start; }

.field label,
.field .name {
    flex: 0 0 67px;
}

.dialog input[type="text"] {
    flex: 1;
    min-width: 0;
    height: 25px;
    padding: 0 4px;
    border: 1px solid #aaa;
    background: #fff;
}

.field textarea {
    flex: 1;
    min-width: 0;
    height: 42px;
    padding: 1px 6px;
    border: 1px solid #aaa;
    background: #e9fbdc;
    color: #222;
    line-height: 19px;
    resize: none;
    overflow: hidden;
    white-space: pre;
}

.swatch {
    justify-content: center;
    width: 28px;
    height: 28px;
    border: 1px solid #aaa;
    background: #f8f8f8;
}

.swatch.on { background: #dcdcdc; }

.swatch + .swatch { margin-left: -1px; }

.field:has(.swatch) { min-height: 32px; }

.slider { min-height: 34px; }

.slider input {
    appearance: none;
    flex: 1;
    min-width: 0;
    height: 22px;
    margin: 0 2px;
    background: linear-gradient(#999, #999) center / 100% 1px no-repeat;
}

.slider input::-webkit-slider-thumb {
    appearance: none;
    width: 9px;
    height: 22px;
    border: 1px solid #888;
    border-radius: 1px;
    background: #f8f8f8;
}

.check {
    display: flex;
    align-items: center;
    gap: 7px;
    height: 36px;
}

.check input {
    appearance: none;
    width: 12px;
    height: 12px;
    margin: 0 0 0 2px;
    border: 1px solid #666;
    background: #fff;
}

.check input:checked::after {
    content: "";
    display: block;
    width: 4px;
    height: 7px;
    margin: 0 3px;
    border: solid #333;
    border-width: 0 2px 2px 0;
    transform: rotate(40deg);
}

.mode-row {
    display: flex;
    gap: 5px;
}

.speed select {
    width: 67px;
    height: 25px;
}

.mode-row input:disabled { color: #b0b0b0; }

.dialog-foot {
    display: flex;
    justify-content: space-between;
    padding: 10px 10px 11px;
    border-top: 1px solid #bbb;
}

.dialog-foot button {
    height: 25px;
    padding: 0 9px;
    border: 1px solid #aaa;
    background: #f8f8f8;
}

.dialog-foot .ok {
    width: 96px;
    border-color: #5bc0f0;
    background: #9fdcfc;
}

.watermark {
    position: absolute;
    right: 4px;
    bottom: 4px;
    display: flex;
    width: 207px;
    height: 63px;
    padding: 3px 4px 3px 2px;
    background: rgba(255, 255, 255, 0.35);
}

.rings {
    width: 56px;
    height: 56px;
    opacity: 0.75;
}

.brand {
    flex: 1;
    display: flex;
    flex-direction: column;
    align-items: center;
    white-space: nowrap;
}

.brand strong {
    color: #4a9fae;
    font-size: 29px;
    line-height: 34px;
}

.brand span {
    color: #a9d5d0;
    font-size: 15px;
    line-height: 24px;
}
```
